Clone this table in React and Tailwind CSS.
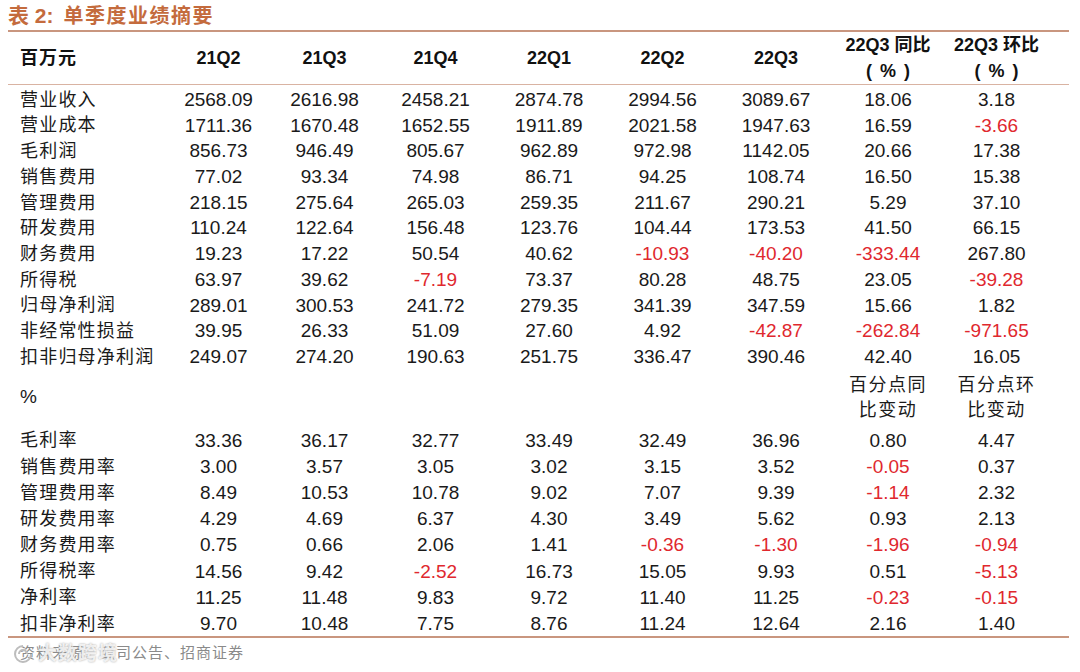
import React from "react";

const sans = { fontFamily: '"Liberation Sans", Arial, "Noto Sans CJK SC", sans-serif' };

const cols =
  "grid grid-cols-[159px_103px_109px_113px_114px_113px_114px_110px_107px_19px]";

const heads = ["21Q2", "21Q3", "21Q4", "22Q1", "22Q2", "22Q3"];

const amounts = [
  ["营业收入", "2568.09", "2616.98", "2458.21", "2874.78", "2994.56", "3089.67", "18.06", "3.18"],
  ["营业成本", "1711.36", "1670.48", "1652.55", "1911.89", "2021.58", "1947.63", "16.59", "-3.66"],
  ["毛利润", "856.73", "946.49", "805.67", "962.89", "972.98", "1142.05", "20.66", "17.38"],
  ["销售费用", "77.02", "93.34", "74.98", "86.71", "94.25", "108.74", "16.50", "15.38"],
  ["管理费用", "218.15", "275.64", "265.03", "259.35", "211.67", "290.21", "5.29", "37.10"],
  ["研发费用", "110.24", "122.64", "156.48", "123.76", "104.44", "173.53", "41.50", "66.15"],
  ["财务费用", "19.23", "17.22", "50.54", "40.62", "-10.93", "-40.20", "-333.44", "267.80"],
  ["所得税", "63.97", "39.62", "-7.19", "73.37", "80.28", "48.75", "23.05", "-39.28"],
  ["归母净利润", "289.01", "300.53", "241.72", "279.35", "341.39", "347.59", "15.66", "1.82"],
  ["非经常性损益", "39.95", "26.33", "51.09", "27.60", "4.92", "-42.87", "-262.84", "-971.65"],
  ["扣非归母净利润", "249.07", "274.20", "190.63", "251.75", "336.47", "390.46", "42.40", "16.05"],
];

const ratios = [
  ["毛利率", "33.36", "36.17", "32.77", "33.49", "32.49", "36.96", "0.80", "4.47"],
  ["销售费用率", "3.00", "3.57", "3.05", "3.02", "3.15", "3.52", "-0.05", "0.37"],
  ["管理费用率", "8.49", "10.53", "10.78", "9.02", "7.07", "9.39", "-1.14", "2.32"],
  ["研发费用率", "4.29", "4.69", "6.37", "4.30", "3.49", "5.62", "0.93", "2.13"],
  ["财务费用率", "0.75", "0.66", "2.06", "1.41", "-0.36", "-1.30", "-1.96", "-0.94"],
  ["所得税率", "14.56", "9.42", "-2.52", "16.73", "15.05", "9.93", "0.51", "-5.13"],
  ["净利率", "11.25", "11.48", "9.83", "9.72", "11.40", "11.25", "-0.23", "-0.15"],
  ["扣非净利率", "9.70", "10.48", "7.75", "8.76", "11.24", "12.64", "2.16", "1.40"],
];

function Row({ cells, h }) {
  const [label, ...vals] = cells;
  return (
    <div className={`${cols} ${h} items-center`}>
      <div className="pl-[12px] text-[18px] tracking-[1.2px] text-[#1a1a1a]">{label}</div>
      {vals.map((v, i) => (
        <div
          key={i}
          className={`text-center text-[19px] ${v.startsWith("-") ? "text-[#e0282e]" : "text-[#1a1a1a]"}`}
        >
          {v}
        </div>
      ))}
      <div />
    </div>
  );
}

function Pct() {
  return (
    <div className="flex justify-center gap-[8px] font-bold">
      <span>(</span>
      <span>%</span>
      <span>)</span>
    </div>
  );
}

export default function App() {
  return (
    <div className="w-[1080px] h-[672px] bg-white overflow-hidden" style={sans}>
      <div className="ml-[8px] w-[1061px]">
        {/* title */}
        <div className="h-[30px] flex items-center pt-[2px] text-[20px] font-bold text-[#c46b3d]">
          <span className="text-[21px]">表 2:</span>
          <span className="ml-[10px] tracking-[1.5px]">单季度业绩摘要</span>
        </div>
        <div className="h-[2px] bg-[#c9967f]" />

        {/* header */}
        <div className={`${cols} h-[52px] items-center font-bold text-[#111]`}>
          <div className="pl-[12px] text-[18px] tracking-[1px]">百万元</div>
          {heads.map((h) => (
            <div key={h} className="text-center text-[18px]">{h}</div>
          ))}
          <div className="text-center text-[18px] leading-[26px]">
            <div>22Q3 同比</div>
            <Pct />
          </div>
          <div className="text-center text-[18px] leading-[26px]">
            <div>22Q3 环比</div>
            <Pct />
          </div>
          <div />
        </div>
        <div className="h-[1px] bg-[#d9b3a2]" />

        <div className="pt-[1px]">
          {amounts.map((r) => (
            <Row key={r[0]} cells={r} h="h-[25.7px]" />
          ))}
        </div>

        {/* percent block */}
        <div className={`${cols} h-[58px] items-center text-[#1a1a1a]`}>
          <div className="pl-[12px] text-[19px]">%</div>
          <div /><div /><div /><div /><div /><div />
          <div className="text-center text-[18px] leading-[25px] tracking-[1.5px]">
            <div>百分点同</div>
            <div>比变动</div>
          </div>
          <div className="text-center text-[18px] leading-[25px] tracking-[1.5px]">
            <div>百分点环</div>
            <div>比变动</div>
          </div>
          <div />
        </div>

        {ratios.map((r) => (
          <Row key={r[0]} cells={r} h="h-[26.2px]" />
        ))}
        <div className="h-[2px] bg-[#c9967f]" />

        {/* source, partly covered by a watermark */}
        <div className="relative h-[30px] flex items-center pl-[12px] text-[15px] tracking-[1px] text-[#8a8a8a]">
          <span>资料来源：公司公告、招商证券</span>
          <div className="absolute left-[4px] top-[2px] flex items-center gap-[4px] text-[19px] font-bold text-white/80 [text-shadow:0_0_2px_#9a9a9a]">
            <svg width="22" height="22" viewBox="0 0 22 22" fill="none" stroke="#bdbdbd" strokeWidth="2">
              <path d="M11 3a8 8 0 1 0 8 8" />
              <path d="M7 11a4 4 0 0 1 8 0" />
            </svg>
            <span>大数跨境</span>
          </div>
        </div>
      </div>
    </div>
  );
}
